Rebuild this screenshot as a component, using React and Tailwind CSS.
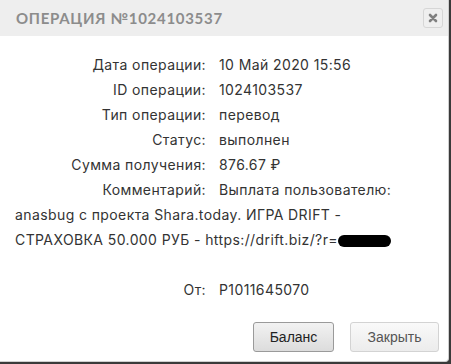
export default function App() {
  const rows = [
    ["Дата операции:", "10 Май 2020 15:56"],
    ["ID операции:", "1024103537"],
    ["Тип операции:", "перевод"],
    ["Статус:", "выполнен"],
    ["Сумма получения:", "876.67 ₽"],
  ]

  return (
    <div className="w-[451px] h-[364px] bg-[#3a3a3a] overflow-hidden">
      <div className="w-[449px] h-[362px] bg-white rounded-br-[4px] border-r border-b border-[#cfcfcf] flex flex-col">
        {/* Header */}
        <div className="h-[36px] bg-[#eeeeee] flex items-center justify-between pl-[16px] pr-[5px]">
          <span className="font-['Lato',sans-serif] font-bold text-[15px] tracking-[0.7px] text-[#8c8c8c]">
            ОПЕРАЦИЯ №1024103537
          </span>
          <button className="w-[20px] h-[20px] rounded-[3px] border border-[#d6d6d6] bg-[#efefef] flex items-center justify-center">
            <svg width="10" height="10" viewBox="0 0 10 10">
              <path d="M2 2 L8 8 M8 2 L2 8" stroke="#808080" strokeWidth="2.6" strokeLinecap="round" />
            </svg>
          </button>
        </div>

        {/* Body */}
        <div className="font-['Inter',sans-serif] text-[14px] tracking-[0.4px] text-[#333] pl-[15px] pr-[44px] pt-[16px] leading-[25px]">
          {rows.map(([label, value]) => (
            <div key={label} className="flex">
              <span className="w-[191px] text-right">{label}</span>
              <span className="ml-[13px]">{value}</span>
            </div>
          ))}
          <p>
            <span className="inline-block w-[191px] text-right mr-[13px]">Комментарий:</span>
            Выплата пользователю: anasbug с проекта Shara.today. ИГРА DRIFT - СТРАХОВКА 50.000 РУБ -{" "}
            <span className="whitespace-nowrap">
              https://drift.biz/?r=
              <span className="inline-block align-middle w-[53px] h-[12px] rounded-full bg-black"></span>
            </span>
          </p>
          <div className="h-[25px]"></div>
          <div className="flex">
            <span className="w-[191px] text-right">От:</span>
            <span className="ml-[13px]">P1011645070</span>
          </div>
        </div>

        {/* Footer */}
        <div className="mt-auto flex justify-end gap-[16px] pr-[9px] pb-[9px] font-['Liberation_Sans',sans-serif] text-[14px]">
          <button className="w-[81px] h-[30px] rounded-[3px] border border-[#9a9a9a] bg-gradient-to-b from-[#f2f2f2] to-[#dcdcdc] text-[#222]">
            Баланс
          </button>
          <button className="w-[89px] h-[30px] rounded-[3px] border border-[#d3d3d3] bg-gradient-to-b from-[#f9f9f9] to-[#ececec] text-[#555]">
            Закрыть
          </button>
        </div>
      </div>
    </div>
  )
}
